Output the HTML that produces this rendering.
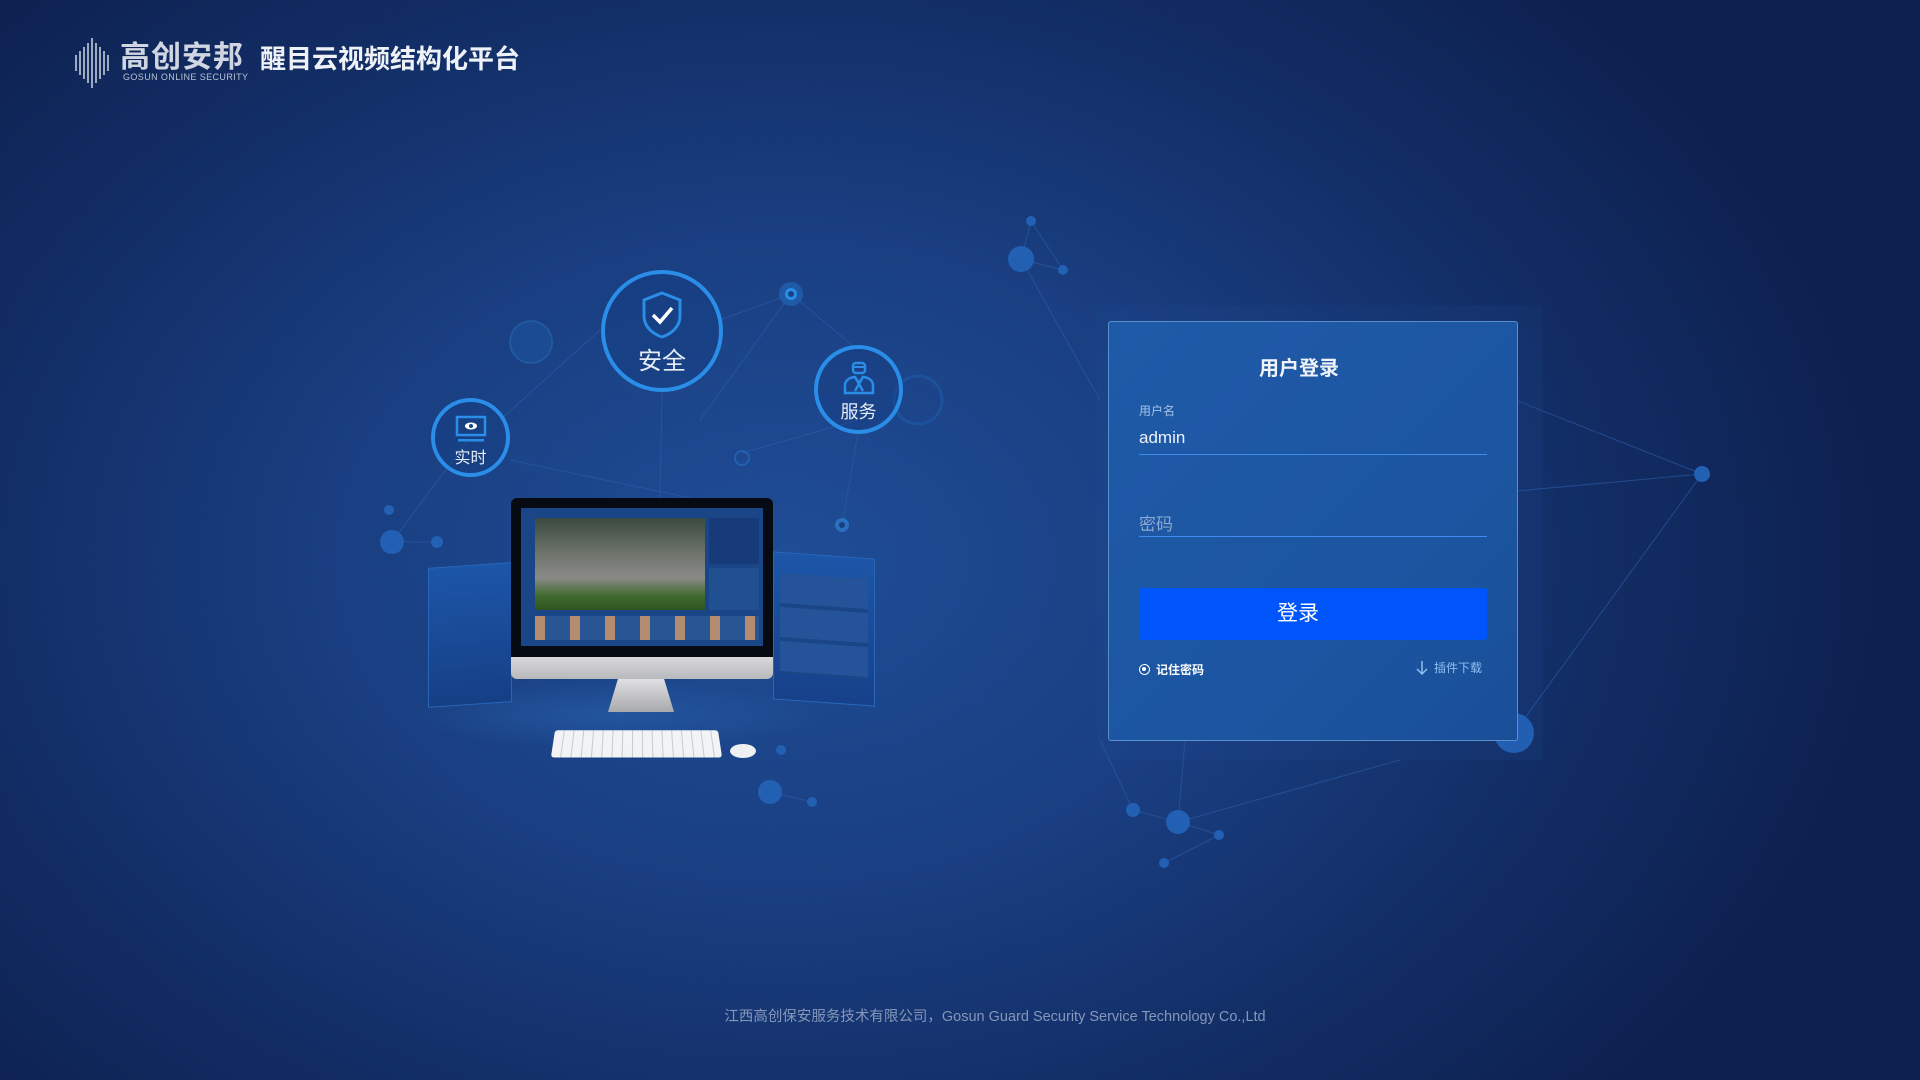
<!DOCTYPE html>
<html><head><meta charset="utf-8"><style>
*{margin:0;padding:0;box-sizing:border-box}
body{width:1920px;height:1080px;overflow:hidden;position:relative;font-family:"Liberation Sans","Noto Sans CJK SC",sans-serif;
background:radial-gradient(ellipse 1100px 800px at 780px 560px,#1f4d96 0%,#1a3f82 40%,#132f68 70%,#0d2150 100%);}
.abs{position:absolute}
.card{left:1108px;top:321px;width:410px;height:420px;border:1px solid rgba(140,190,240,.55);border-radius:3px;
background:linear-gradient(135deg,#1f5aa8,#1c56a2 60%,#1a4f98);}
.card h2{position:absolute;top:30px;left:0;width:380px;text-align:center;color:#f0f4fa;font-size:20px;font-weight:bold}
.lbl{position:absolute;left:30px;color:#a9c2e4;font-size:12px}
.inp{position:absolute;left:30px;width:348px;border-bottom:1.5px solid #3f8cf0;font-size:17px}
.btn{position:absolute;left:30px;top:266px;width:348px;height:52px;background:#0055fa;border-radius:3px;color:#fff;font-size:21px;text-align:center;line-height:52px;padding-right:30px}
.ring{position:absolute;border:4px solid #2a8de8;border-radius:50%;background:rgba(20,60,130,.35);color:#e6edf6;text-align:center}
</style></head><body>
<svg class="abs" style="left:0;top:0" width="1920" height="1080">
<g stroke="#2b5fab" stroke-width="1" opacity=".6" fill="none">
<line x1="1031" y1="221" x2="1021" y2="259"/><line x1="1031" y1="221" x2="1063" y2="270"/><line x1="1021" y1="259" x2="1063" y2="270"/>
<line x1="1021" y1="259" x2="1100" y2="400"/>
<line x1="1394" y1="352" x2="1702" y2="474"/><line x1="1200" y1="520" x2="1702" y2="474"/><line x1="1702" y1="474" x2="1514" y2="733"/>
<line x1="1133" y1="810" x2="1178" y2="822"/><line x1="1178" y1="822" x2="1219" y2="835"/><line x1="1219" y1="835" x2="1164" y2="863"/>
<line x1="1178" y1="822" x2="1400" y2="760"/><line x1="1133" y1="810" x2="1100" y2="740"/><line x1="1178" y1="822" x2="1185" y2="740"/>
<line x1="791" y1="294" x2="858" y2="350"/><line x1="791" y1="294" x2="720" y2="320"/><line x1="791" y1="294" x2="700" y2="420"/>
<line x1="662" y1="392" x2="660" y2="500"/><line x1="470" y1="437" x2="392" y2="542"/><line x1="510" y1="460" x2="700" y2="500"/>
<line x1="858" y1="433" x2="842" y2="525"/><line x1="858" y1="420" x2="742" y2="453"/><line x1="600" y1="330" x2="500" y2="420"/>
<line x1="392" y1="542" x2="437" y2="542"/><line x1="770" y1="792" x2="812" y2="802"/>
</g>
<g fill="#2260b4">
<circle cx="1031" cy="221" r="5"/><circle cx="1021" cy="259" r="13"/><circle cx="1063" cy="270" r="5"/>
<circle cx="1702" cy="474" r="8"/><circle cx="1394" cy="352" r="8"/><circle cx="1514" cy="733" r="20"/>
<circle cx="1133" cy="810" r="7"/><circle cx="1178" cy="822" r="12"/><circle cx="1219" cy="835" r="5"/><circle cx="1164" cy="863" r="5"/>
<circle cx="392" cy="542" r="12"/><circle cx="437" cy="542" r="6"/><circle cx="389" cy="510" r="5"/>
<circle cx="770" cy="792" r="12"/><circle cx="812" cy="802" r="5"/><circle cx="781" cy="750" r="5"/>
</g>
<circle cx="531" cy="342" r="21" fill="#1b4b93" stroke="#21589f" stroke-width="2"/>
<circle cx="918" cy="400" r="24" fill="none" stroke="#1e5aa8" stroke-width="3" opacity=".6"/>
<circle cx="791" cy="294" r="12" fill="#1e5aa8"/><circle cx="791" cy="294" r="6" fill="#2a8de8"/><circle cx="791" cy="294" r="3" fill="#1a3f82"/>
<circle cx="842" cy="525" r="7" fill="#2a70c0"/><circle cx="842" cy="525" r="3" fill="#1a3f82"/>
<circle cx="742" cy="458" r="7" fill="none" stroke="#2260b4" stroke-width="2"/>
</svg>
<svg class="abs" style="left:74px;top:37px" width="38" height="52"><g stroke="#cfd6e2" stroke-width="1.5">
<line x1="2" y1="18" x2="2" y2="34"/><line x1="6" y1="14" x2="6" y2="38"/><line x1="10" y1="10" x2="10" y2="42"/><line x1="14" y1="6" x2="14" y2="46"/><line x1="18" y1="1" x2="18" y2="51"/><line x1="22" y1="6" x2="22" y2="46"/><line x1="26" y1="10" x2="26" y2="42"/><line x1="30" y1="14" x2="30" y2="38"/><line x1="34" y1="18" x2="34" y2="34"/></g></svg>
<div class="abs" style="left:120px;top:42px;color:#cfd6e2;font-size:30px;font-weight:bold;letter-spacing:1px;line-height:32px">高创安邦</div>
<div class="abs" style="left:123px;top:72px;color:#b8c2d2;font-size:9px;line-height:10px;letter-spacing:.4px">GOSUN ONLINE SECURITY</div>
<div class="abs" style="left:260px;top:43px;color:#eef2f7;font-size:26px;font-weight:bold;line-height:32px">醒目云视频结构化平台</div>
<div class="abs" style="left:410px;top:680px;width:420px;height:70px;border-radius:50%;background:radial-gradient(ellipse,#23569e,rgba(20,60,130,0) 70%)"></div>
<div class="abs" style="left:428px;top:565px;width:84px;height:140px;background:linear-gradient(#1c56a8,#163f85);transform:skewY(-4deg);border:1px solid #2a66b8"></div>
<div class="abs" style="left:773px;top:555px;width:102px;height:148px;background:linear-gradient(#1c56a8,#17418a);transform:skewY(4deg);border:1px solid #2a66b8">
<div style="margin:20px 6px;height:100px;background:repeating-linear-gradient(#24539a 0 30px,#1a4688 30px 34px)"></div></div>
<div class="abs" style="left:511px;top:498px;width:262px;height:160px;background:#060a12;border-radius:6px 6px 0 0">
<div style="position:absolute;left:10px;top:10px;width:242px;height:138px;background:#1a4586">
<div style="position:absolute;left:14px;top:10px;width:170px;height:92px;background:linear-gradient(#3b4a40,#70756e 40%,#8a8a86 65%,#3f6a2e 85%,#2f5422)"></div>
<div style="position:absolute;left:188px;top:10px;width:50px;height:46px;background:#173b78"></div>
<div style="position:absolute;left:188px;top:60px;width:50px;height:42px;background:#20508f"></div>
<div style="position:absolute;left:14px;top:108px;width:224px;height:24px;background:repeating-linear-gradient(90deg,#b48c70 0 10px,#2a5595 10px 35px)"></div>
</div></div>
<div class="abs" style="left:511px;top:657px;width:262px;height:22px;background:linear-gradient(#d8d8da,#b8b9bc);border-radius:0 0 6px 6px"></div>
<div class="abs" style="left:608px;top:679px;width:66px;height:33px;background:linear-gradient(#e0e0e2,#a8a9ac);clip-path:polygon(15% 0,85% 0,100% 100%,0 100%)"></div>
<div class="abs" style="left:553px;top:729px;width:167px;height:29px;background:repeating-linear-gradient(90deg,#f2f3f5 0 9px,#c8cacd 9px 10px);border-radius:3px;transform:perspective(200px) rotateX(20deg)"></div>
<div class="abs" style="left:730px;top:744px;width:26px;height:14px;background:#eef0f2;border-radius:50%"></div>
<div class="ring" style="left:601px;top:270px;width:122px;height:122px"><svg width="44" height="50" style="margin-top:16px" viewBox="0 0 44 50"><path d="M22 3 L40 10 V26 C40 37 31 44 22 47 C13 44 4 37 4 26 V10 Z" fill="none" stroke="#2a8de8" stroke-width="3"/><path d="M13 25 L20 32 L32 18" fill="none" stroke="#fff" stroke-width="3.5"/></svg><div style="font-size:24px;line-height:26px;margin-top:4px">安全</div></div>
<div class="ring" style="left:431px;top:398px;width:79px;height:79px"><svg width="34" height="28" style="margin-top:13px" viewBox="0 0 34 28"><rect x="3" y="2" width="28" height="18" fill="none" stroke="#2a8de8" stroke-width="2.5"/><ellipse cx="17" cy="11" rx="6" ry="3.5" fill="#fff"/><circle cx="17" cy="11" r="2" fill="#1a4586"/><rect x="4" y="24" width="26" height="2.5" fill="#2a8de8"/></svg><div style="font-size:16px;line-height:18px;margin-top:2px">实时</div></div>
<div class="ring" style="left:814px;top:345px;width:89px;height:89px"><svg width="32" height="34" style="margin-top:12px" viewBox="0 0 32 34"><rect x="10" y="2" width="12" height="10" rx="3" fill="none" stroke="#2a8de8" stroke-width="2.5"/><line x1="10" y1="6" x2="22" y2="6" stroke="#2a8de8" stroke-width="2"/><path d="M2 32 V24 C2 19 8 16 12 16 L16 22 L20 16 C24 16 30 19 30 24 V32 Z M12 16 L20 30 M20 16 L12 30" fill="none" stroke="#2a8de8" stroke-width="2.5"/></svg><div style="font-size:18px;line-height:20px;margin-top:2px">服务</div></div>
<div class="abs" style="left:1097px;top:305px;width:446px;height:455px;background:rgba(40,90,170,.1);border-radius:4px"></div>
<div class="abs card">
<h2>用户登录</h2>
<div class="lbl" style="top:80px">用户名</div>
<div class="inp" style="top:106px;height:27px;color:#eef2f8">admin</div>
<div class="inp" style="top:188px;height:27px;color:#8aa8d0">密码</div>
<div class="btn">登录</div>
<div class="abs" style="left:30px;top:339px;color:#fff;font-size:12px;font-weight:bold;display:flex;align-items:center"><span style="display:inline-block;width:11px;height:11px;border:1.5px solid #fff;border-radius:50%;margin-right:6px;position:relative"><span style="position:absolute;left:2px;top:2px;width:4px;height:4px;background:#fff;border-radius:50%"></span></span>记住密码</div>
<div class="abs" style="left:306px;top:337px;color:#8fc0f0;font-size:12px;display:flex;align-items:center"><svg width="14" height="16" style="margin-right:5px"><path d="M7 1 V14 M2 9 L7 14 L12 9" fill="none" stroke="#8fc0f0" stroke-width="1.5"/></svg>插件下载</div>
</div>
<div class="abs" style="left:0;top:1005px;width:1990px;text-align:center;color:#8597b8;font-size:14.5px">江西高创保安服务技术有限公司，Gosun Guard Security Service Technology Co.,Ltd</div>
</body></html>
